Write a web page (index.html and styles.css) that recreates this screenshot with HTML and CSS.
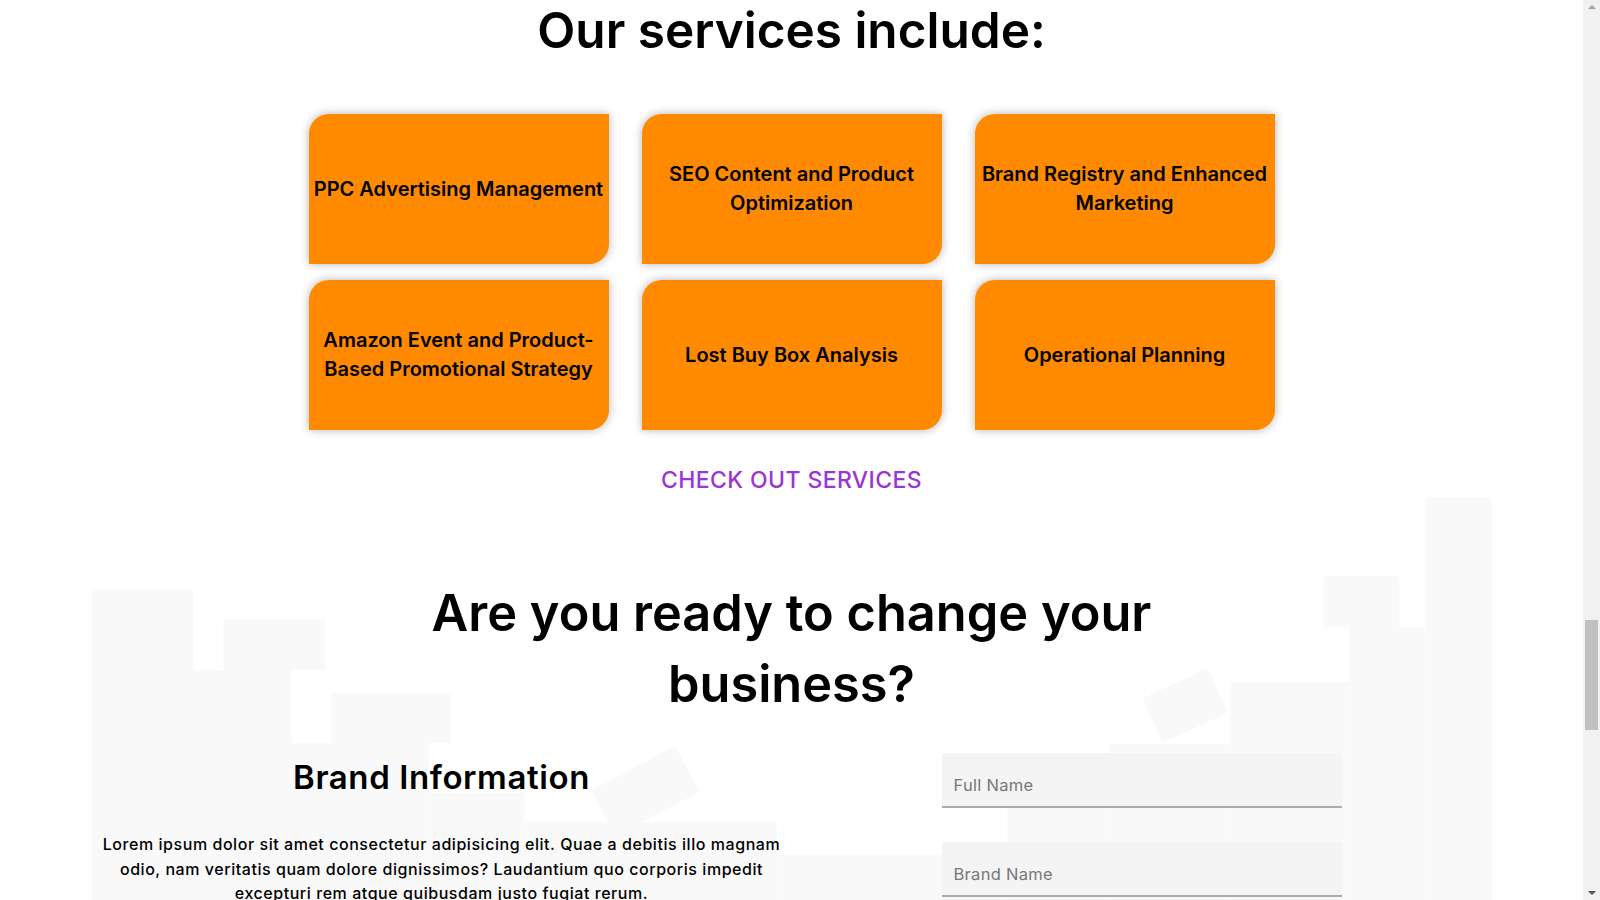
FILE: index.html
```html
<!DOCTYPE html>
<html lang="en">
<head>
<meta charset="utf-8">
<title>Our services</title>
<link rel="stylesheet" href="styles.css">
</head>
<body>
  <section class="services">
    <h2 class="services-title">Our services include:</h2>
    <div class="service-grid">
      <div class="service-card">PPC Advertising Management</div>
      <div class="service-card">SEO Content and Product Optimization</div>
      <div class="service-card">Brand Registry and Enhanced Marketing</div>
      <div class="service-card">Amazon Event and Product-Based Promotional Strategy</div>
      <div class="service-card">Lost Buy Box Analysis</div>
      <div class="service-card">Operational Planning</div>
    </div>
    <a class="services-link" href="#">CHECK OUT SERVICES</a>
  </section>

  <section class="cta">
    <svg class="cta-bg" aria-hidden="true">
      <g fill="#f9f9f9">
        <rect x="0" y="95" width="101" height="1000" rx="2"/>
        <rect x="131.5" y="124" width="102" height="51" rx="2"/>
        <rect x="100.5" y="175" width="99" height="1000"/>
        <rect x="238.5" y="198" width="120" height="50" rx="2"/>
        <rect x="198.5" y="248" width="138" height="1000"/>
        <rect x="336.5" y="298" width="96" height="1000"/>
        <rect x="432.5" y="327" width="252" height="1000"/>
        <rect x="506" y="270" width="95" height="52" rx="3" transform="rotate(-28 553.5 296)"/>
        <rect x="1333.5" y="2" width="66.5" height="1000" rx="2"/>
        <rect x="1231.5" y="81" width="76" height="51" rx="3"/>
        <rect x="1257.5" y="132" width="76" height="1000"/>
        <rect x="1138.5" y="187" width="119" height="1000"/>
        <rect x="1017.5" y="249" width="121" height="1000"/>
        <rect x="915.5" y="307" width="102" height="1000"/>
        <rect x="684.5" y="360" width="231" height="1000"/>
        <rect x="1057" y="186" width="72" height="49" rx="3" transform="rotate(-25 1093 210)"/>
      </g>
    </svg>

    <h2 class="cta-title">Are you ready to change your business?</h2>

    <div class="cta-cols">
      <div class="brand-info">
        <h3 class="brand-title">Brand Information</h3>
        <p class="brand-text">Lorem ipsum dolor sit amet consectetur adipisicing elit. Quae a debitis illo magnam odio, nam veritatis quam dolore dignissimos? Laudantium quo corporis impedit excepturi rem atque quibusdam justo fugiat rerum.</p>
      </div>
      <form class="brand-form">
        <input class="field" type="text" placeholder="Full Name">
        <input class="field" type="text" placeholder="Brand Name">
        <input class="field" type="email" placeholder="Email Address">
        <input class="field" type="tel" placeholder="Phone Number">
        <textarea class="field field-area" placeholder="Tell us about your brand"></textarea>
        <button class="submit" type="button">SUBMIT</button>
      </form>
    </div>
  </section>

  <div class="scrollbar" aria-hidden="true">
    <span class="sb-arrow sb-up"></span>
    <span class="sb-arrow sb-down"></span>
    <span class="sb-thumb"></span>
  </div>
</body>
</html>
```

FILE: styles.css
```css
html, body {
  margin: 0;
  padding: 0;
}

body {
  margin-right: 17px;
  font-family: Inter, "Noto Sans", sans-serif;
  color: #000;
  background: #fff;
}

.services {
  display: flex;
  flex-direction: column;
  align-items: center;
}

.services-title {
  margin: 0;
  font-size: 49.5px;
  line-height: 60px;
  font-weight: 600;
}

.service-grid {
  margin-top: 54px;
  display: grid;
  grid-template-columns: repeat(3, 300px);
  grid-auto-rows: 150px;
  column-gap: 33px;
  row-gap: 16px;
}

.service-card {
  background: #ff8a00;
  border-radius: 20px 0 20px 0;
  box-shadow: 0 0 10px rgba(0, 0, 0, 0.3);
  display: flex;
  align-items: center;
  justify-content: center;
  text-align: center;
  padding: 0 4px;
  font-size: 20px;
  font-weight: 600;
  line-height: 29px;
}

.services-link {
  margin-top: 35px;
  font-size: 23px;
  line-height: 30px;
  font-weight: 500;
  letter-spacing: 0.4px;
  color: #9a36d4;
  text-decoration: none;
}

.cta {
  position: relative;
  width: 1400px;
  margin: 0 auto;
  padding: 82px 0 80px;
}

.cta-bg {
  position: absolute;
  left: 0;
  top: 0;
  width: 100%;
  height: 100%;
  z-index: 0;
}

.cta-title,
.cta-cols {
  position: relative;
  z-index: 1;
}

.cta-title {
  margin: 0 auto;
  max-width: 780px;
  text-align: center;
  font-size: 50.5px;
  line-height: 71px;
  font-weight: 600;
}

.cta-cols {
  margin-top: 34px;
  display: grid;
  grid-template-columns: 1fr 1fr;
}

.brand-info {
  text-align: center;
  padding: 0 8px;
}

.brand-title {
  margin: 0;
  font-size: 33px;
  line-height: 48px;
  font-weight: 600;
  letter-spacing: 0.6px;
}

.brand-text {
  margin: 31px 0 0;
  font-size: 16px;
  line-height: 24.5px;
  font-weight: 500;
  letter-spacing: 0.55px;
}

.brand-form {
  display: flex;
  flex-direction: column;
  align-items: center;
  gap: 34px;
}

.field {
  box-sizing: border-box;
  width: 400px;
  height: 55px;
  padding: 10px 12px 0;
  border: none;
  border-bottom: 2px solid #ababab;
  border-radius: 3px 3px 0 0;
  background: #f4f4f4;
  font-family: Inter, "Noto Sans", sans-serif;
  font-size: 16.5px;
  letter-spacing: 0.3px;
  color: #222;
  outline: none;
}

.field::placeholder {
  color: #777;
}

.field-area {
  height: 120px;
  padding-top: 16px;
  resize: none;
}

.submit {
  width: 400px;
  height: 50px;
  border: none;
  border-radius: 3px;
  background: #9a36d4;
  color: #fff;
  font-family: Inter, "Noto Sans", sans-serif;
  font-size: 16px;
  font-weight: 600;
}

.scrollbar {
  position: fixed;
  top: 0;
  right: 0;
  width: 17px;
  height: 100vh;
  background: #f1f1f1;
  display: flex;
  flex-direction: column;
  justify-content: space-between;
  align-items: center;
  padding: 5px 0;
  box-sizing: border-box;
}

.sb-arrow {
  width: 0;
  height: 0;
  border-left: 4px solid transparent;
  border-right: 4px solid transparent;
}

.sb-up {
  border-bottom: 4px solid #a3a3a3;
}

.sb-down {
  border-top: 4px solid #505050;
}

.sb-thumb {
  position: absolute;
  left: 2px;
  right: 2px;
  top: 620px;
  height: 110px;
  background: #c1c1c1;
}
```
